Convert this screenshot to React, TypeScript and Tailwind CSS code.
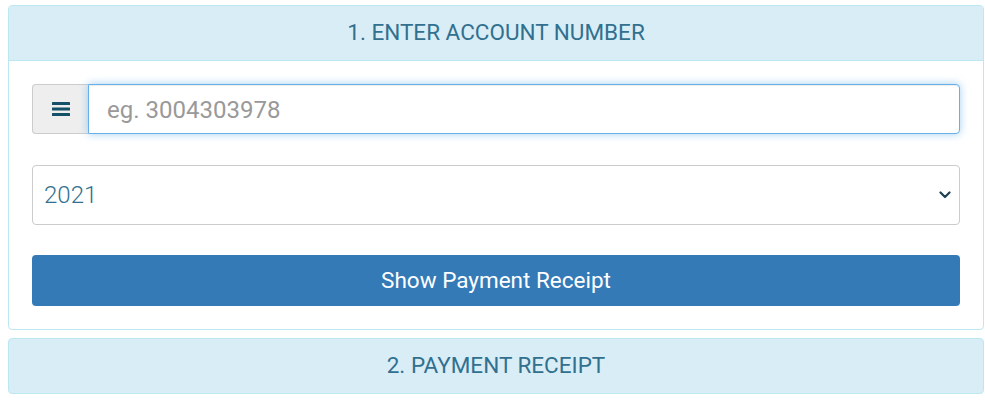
import React from "react";

function Chevron() {
  return (
    <svg width="12" height="8" viewBox="0 0 12 8" className="pointer-events-none absolute right-[9px] top-1/2 -translate-y-1/2">
      <path d="M1.5 1.5 L6 6 L10.5 1.5" fill="none" stroke="#1f3f55" strokeWidth="2.2" strokeLinecap="round" strokeLinejoin="round" />
    </svg>
  );
}

export default function App() {
  return (
    <div className="flex flex-col gap-[8px] bg-white pl-[8px] pr-[1px] pt-[5px] pb-[6px] font-['Roboto',sans-serif]">
      <div className="overflow-hidden rounded-[4px] border border-[#bce8f1] bg-white">
        <div className="flex h-[55px] items-center justify-center border-b border-[#bce8f1] bg-[#d9edf7] pb-[1px] text-[22.5px] text-[#31708f]">
          1. ENTER ACCOUNT NUMBER
        </div>
        <div className="flex flex-col px-[23px] pt-[23px] pb-[23px]">
          <div className="flex h-[50px]">
            <div className="flex w-[56px] items-center justify-center rounded-l-[4px] border border-r-0 border-[#ccc] bg-[#eee]">
              <svg width="18" height="14" viewBox="0 0 18 14">
                <rect x="0" y="0" width="18" height="3" rx="0.5" fill="#155069" />
                <rect x="0" y="5.5" width="18" height="3" rx="0.5" fill="#155069" />
                <rect x="0" y="11" width="18" height="3" rx="0.5" fill="#155069" />
              </svg>
            </div>
            <input
              type="text"
              placeholder="eg. 3004303978"
              className="flex-1 rounded-r-[4px] border border-[#66afe9] bg-white px-[18px] pt-[2px] text-[24px] text-[#31708f] shadow-[inset_0_1px_1px_rgba(0,0,0,0.075),0_0_8px_rgba(102,175,233,0.6)] outline-none placeholder:text-[#999]"
            />
          </div>
          <div className="relative mt-[31px] h-[60px]">
            <select className="h-full w-full appearance-none rounded-[4px] border border-[#ccc] bg-white px-[11px] text-[24px] font-light text-[#31708f] outline-none">
              <option>2021</option>
            </select>
            <Chevron />
          </div>
          <button className="mt-[30px] h-[51px] rounded-[4px] bg-[#337ab7] text-[22.5px] text-white">
            Show Payment Receipt
          </button>
        </div>
      </div>
      <div className="flex h-[56px] items-center justify-center rounded-[4px] border border-[#bce8f1] bg-[#d9edf7] text-[22.5px] text-[#31708f]">
        2. PAYMENT RECEIPT
      </div>
    </div>
  );
}
